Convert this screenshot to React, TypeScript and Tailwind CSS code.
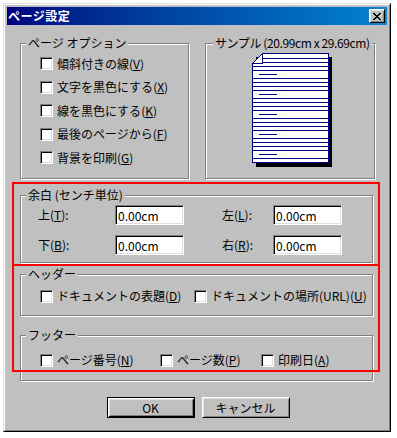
import type { ReactNode } from 'react';

const OPTIONS: { label: string; key: string }[] = [
  { label: '傾斜付きの線', key: 'V' },
  { label: '文字を黒色にする', key: 'X' },
  { label: '線を黒色にする', key: 'K' },
  { label: '最後のページから', key: 'F' },
  { label: '背景を印刷', key: 'G' },
];

function Checkbox() {
  return (
    <span className="box-border inline-block h-[13px] w-[13px] shrink-0 border border-t-[#808080] border-l-[#808080] border-b-white border-r-white bg-white shadow-[inset_1px_1px_0_#000,inset_-1px_-1px_0_#dfdfdf]" />
  );
}

function Check({ label, k, className = '' }: { label: string; k: string; className?: string }) {
  return (
    <div className={`flex items-center gap-[4px] ${className}`}>
      <Checkbox />
      <span className="whitespace-nowrap">
        {label}(<u>{k}</u>)
      </span>
    </div>
  );
}

function Group({
  title,
  className,
  legendClass = 'ml-[5px]',
  children,
}: {
  title: string;
  className: string;
  legendClass?: string;
  children?: ReactNode;
}) {
  return (
    <div
      className={`box-border flex flex-col border border-[#808080] shadow-[inset_1px_1px_0_#fff,1px_1px_0_#fff] ${className}`}
    >
      <span className={`-mt-[8px] self-start whitespace-nowrap bg-[#c0c0c0] px-[2px] leading-[14px] ${legendClass}`}>
        {title}
      </span>
      {children}
    </div>
  );
}

const INPUT_CLASS =
  'box-border h-[20px] w-[69px] border border-t-[#808080] border-l-[#808080] border-b-white border-r-white bg-white px-[2px] text-[12px] leading-[14px] shadow-[inset_1px_1px_0_#000,inset_-1px_-1px_0_#dfdfdf] outline-none';

function Field({ label, k, right = false }: { label: string; k: string; right?: boolean }) {
  return (
    <>
      <span className={right ? 'ml-[38px] -mr-[38px] whitespace-nowrap' : 'whitespace-nowrap'}>
        {label}(<u>{k}</u>):
      </span>
      <input readOnly value="0.00cm" className={right ? `ml-[38px] ${INPUT_CLASS}` : INPUT_CLASS} />
    </>
  );
}

// 見本の用紙アイコン（折れた角つき）
function PaperIcon() {
  const rows: number[] = [];
  for (let y = 5; y <= 105; y += 4) rows.push(y);
  return (
    <svg width="80" height="114" viewBox="0 0 80 114" shapeRendering="crispEdges">
      <rect x="4" y="4" width="76" height="110" fill="#000" />
      <path d="M10.5 0.5 H76.5 V109.5 H0.5 V10.5 Z" fill="#fff" stroke="#000080" />
      <path d="M0.5 10.5 L10.5 0.5 V10.5 Z" fill="#fff" stroke="#000080" />
      {rows.map((y) => {
        const short = (y - 1) % 20 === 0;
        const x1 = short ? 7 : y < 11 ? 11 : 1;
        const x2 = short ? 25 : 76;
        return <line key={y} x1={x1} x2={x2} y1={y + 0.5} y2={y + 0.5} stroke="#000080" />;
      })}
    </svg>
  );
}

function CloseGlyph() {
  const px = [
    'XX....XX',
    '.XX..XX.',
    '..XXXX..',
    '...XX...',
    '..XXXX..',
    '.XX..XX.',
    'XX....XX',
  ];
  return (
    <svg width="8" height="7" viewBox="0 0 8 7" shapeRendering="crispEdges">
      {px.flatMap((row, y) =>
        row.split('').map((c, x) => (c === 'X' ? <rect key={`${x}-${y}`} x={x} y={y} width="1" height="1" fill="#000" /> : null)),
      )}
    </svg>
  );
}

export default function App() {
  return (
    <div className="min-h-[438px] bg-white pl-[3px] pt-[3px] font-['Noto_Sans_CJK_JP',sans-serif] text-[12px] leading-[14px] text-black">
      <div className="box-border h-[429px] w-[388px] border border-t-[#dfdfdf] border-l-[#dfdfdf] border-r-black border-b-black">
        <div className="box-border flex h-full flex-col border border-t-white border-l-white border-r-[#808080] border-b-[#808080] bg-[#c0c0c0] p-[2px]">
          <div className="flex h-[18px] shrink-0 items-center bg-linear-to-r from-[#000080] to-[#1084d0] pl-[1px] pr-[2px]">
            <span className="font-bold tracking-[0.5px] text-white">ページ設定</span>
            <button
              aria-label="閉じる"
              className="ml-auto box-border flex h-[14px] w-[16px] items-center justify-center border border-t-white border-l-white border-r-black border-b-black bg-[#c0c0c0] shadow-[inset_1px_1px_0_#dfdfdf,inset_-1px_-1px_0_#808080]"
            >
              <CloseGlyph />
            </button>
          </div>

          <div className="relative flex flex-col">
            <div className="ml-[13px] mt-[18px] flex gap-[16px]">
              <Group title="ページ オプション" className="h-[136px] w-[169px]">
                <div className="mt-[2px] flex flex-col pl-[19px]">
                  {OPTIONS.map((o) => (
                    <Check key={o.key} label={o.label} k={o.key} className="h-[23.5px]" />
                  ))}
                </div>
              </Group>
              <Group
                title="サンプル (20.99cm x 29.69cm)"
                className="h-[136px] w-[170px]"
                legendClass="ml-[7px] tracking-[-0.4px]"
              >
                <div className="ml-[46px] mt-[3px]">
                  <PaperIcon />
                </div>
              </Group>
            </div>

            <Group title="余白 (センチ単位)" className="ml-[13px] mt-[16px] h-[68px] w-[353px]">
              <div className="mt-[3px] grid grid-cols-[77px_69px_51px_69px] gap-y-[10px] pl-[17px] [&>*]:h-[20px] [&>span]:flex [&>span]:items-center">
                <Field label="上" k="T" />
                <Field label="左" k="L" right />
                <Field label="下" k="B" />
                <Field label="右" k="R" right />
              </div>
            </Group>

            <Group title="ヘッダー" className="ml-[13px] mt-[11px] h-[42px] w-[353px]">
              <div className="mt-[7px] flex h-[16px] pl-[19px]">
                <Check label="ドキュメントの表題" k="D" className="w-[154px]" />
                <Check label="ドキュメントの場所(URL)" k="U" />
              </div>
            </Group>

            <Group title="フッター" className="ml-[13px] mt-[19px] h-[46px] w-[353px]">
              <div className="mt-[10px] flex h-[16px] pl-[19px]">
                <Check label="ページ番号" k="N" className="w-[120px]" />
                <Check label="ページ数" k="P" className="w-[101px]" />
                <Check label="印刷日" k="A" />
              </div>
            </Group>

            <div className="mt-[16px] flex justify-center gap-[7px] pl-[2px]">
              <button className="box-border h-[21px] w-[88px] border border-black bg-[#c0c0c0] font-normal shadow-[inset_1px_1px_0_#fff,inset_-1px_-1px_0_#000,inset_2px_2px_0_#dfdfdf,inset_-2px_-2px_0_#808080]">
                OK
              </button>
              <button className="box-border h-[21px] w-[88px] border border-t-white border-l-white border-r-black border-b-black bg-[#c0c0c0] font-normal shadow-[inset_1px_1px_0_#dfdfdf,inset_-1px_-1px_0_#808080]">
                キャンセル
              </button>
            </div>

            {/* 注釈の赤枠 */}
            <div className="pointer-events-none absolute left-[5px] top-[157px] box-border h-[190px] w-[368px] border-2 border-[#ff0000]">
              <div className="absolute left-0 right-0 top-[80px] h-[2px] bg-[#ff0000]" />
            </div>
          </div>
        </div>
      </div>
    </div>
  );
}
